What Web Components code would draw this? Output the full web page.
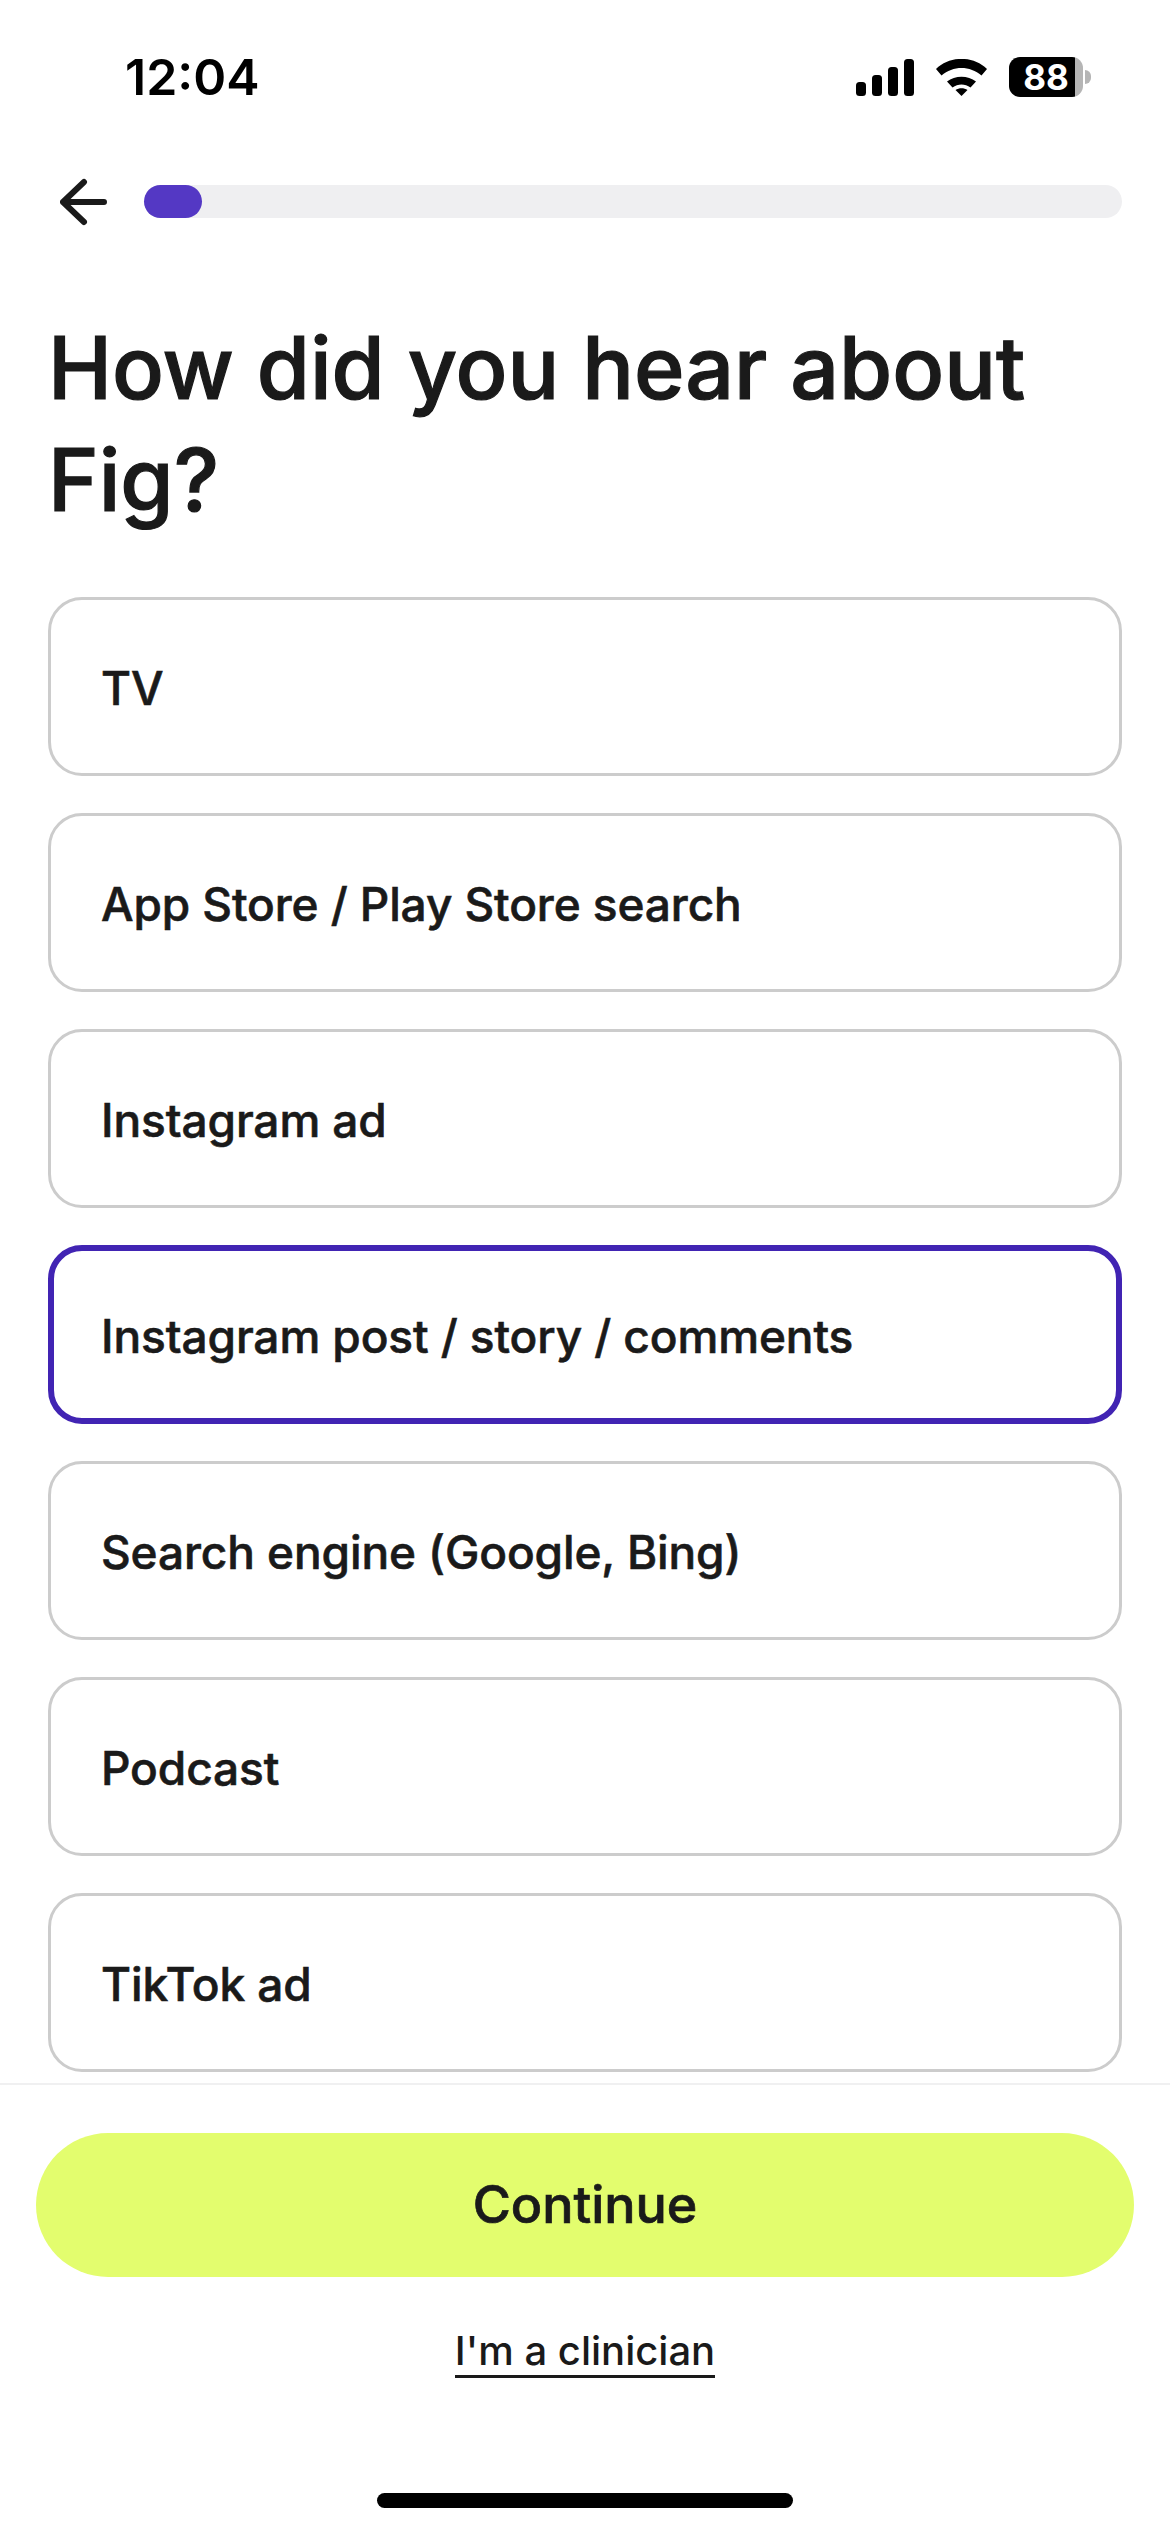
<!DOCTYPE html>
<html lang="en">
<head>
<meta charset="utf-8">
<title>Fig</title>
<style>
  html, body { margin: 0; padding: 0; background: #fff; }
  body { font-family: "Inter", "Liberation Sans", sans-serif; color: #1a1a1a; }
</style>
</head>
<body>
<fig-screen>
  <fig-status-bar slot="status"></fig-status-bar>
  <fig-progress-header slot="nav"></fig-progress-header>
  <span slot="title">How did you hear about Fig?</span>
  <option-card>TV</option-card>
  <option-card>App Store / Play Store search</option-card>
  <option-card>Instagram ad</option-card>
  <option-card selected>Instagram post / story / comments</option-card>
  <option-card>Search engine (Google, Bing)</option-card>
  <option-card>Podcast</option-card>
  <option-card>TikTok ad</option-card>
  <fig-footer slot="footer"></fig-footer>
</fig-screen>
<script>
class FigScreen extends HTMLElement {
  constructor() {
    super();
    this.attachShadow({ mode: "open" });
    this.shadowRoot.innerHTML = `
      <style>
        :host {
          display: flex;
          flex-direction: column;
          width: 1170px;
          height: 2532px;
          overflow: hidden;
          background: #fff;
        }
        h1 {
          margin: 59px 100px 61px 48px;
          font-size: 86px;
          line-height: 112px;
          font-weight: 500;
          -webkit-text-stroke: 1.2px #1a1a1a;
          color: #1a1a1a;
        }
        .list {
          flex: 1;
          min-height: 0;
          overflow: hidden;
          display: flex;
          flex-direction: column;
          gap: 37px;
          padding: 0 48px;
        }
      </style>
      <slot name="status"></slot>
      <slot name="nav"></slot>
      <h1><slot name="title"></slot></h1>
      <div class="list"><slot></slot></div>
      <slot name="footer"></slot>
    `;
  }
}

class FigStatusBar extends HTMLElement {
  constructor() {
    super();
    this.attachShadow({ mode: "open" });
    this.shadowRoot.innerHTML = `
      <style>
        :host {
          display: flex;
          justify-content: space-between;
          align-items: flex-start;
          box-sizing: border-box;
          height: 150px;
          padding: 57px 79px 0 125px;
        }
        .time {
          font-family: "Inter", "Liberation Sans", sans-serif;
          font-size: 50px;
          line-height: 40px;
          font-weight: 600;
          color: #000;
        }
        .icons { display: flex; align-items: flex-start; gap: 22px; }
        svg { display: block; }
        .signal { margin-top: 2px; }
        .wifi { margin-top: 2px; }
        .battery {
          display: flex;
          width: 74px;
          height: 40px;
          border-radius: 11px;
          overflow: hidden;
          background: linear-gradient(90deg, #000 66px, #b5b5b5 66px);
          margin-right: 8px;
        }
        .battery span {
          width: 74px;
          text-align: center;
          font-family: "Inter", "Liberation Sans", sans-serif;
          font-size: 35px;
          line-height: 40px;
          font-weight: 700;
          color: #fff;
        }
        .wrap { position: relative; display: flex; }
        .nub {
          position: absolute;
          left: 76px;
          top: 13px;
          width: 6px;
          height: 14px;
          border-radius: 0 7px 7px 0;
          background: #b5b5b5;
        }
      </style>
      <div class="time">12:04</div>
      <div class="icons">
        <svg class="signal" width="58" height="37" viewBox="0 0 58 37" fill="#000">
          <rect x="0" y="23" width="10" height="14" rx="3.5"/>
          <rect x="16" y="16" width="10" height="21" rx="3.5"/>
          <rect x="32" y="8" width="10" height="29" rx="3.5"/>
          <rect x="48" y="0" width="10" height="37" rx="3.5"/>
        </svg>
        <svg class="wifi" width="51" height="37" viewBox="0 0 51 37" fill="#000">
          <path d="M0 10C14-3.500 37-3.500 51 10L45.500 16.500C34 6.500 17 6.500 5.500 16.500Z"/>
          <path d="M11 22.500C19 16 32 16 40 22.500L34.500 28.500C29 24.500 22 24.500 16.500 28.500Z"/>
          <path d="M19.500 31C23 28.500 28 28.500 31.500 31L25.500 37Z"/>
        </svg>
        <div class="wrap">
          <div class="battery"><span>88</span></div>
          <div class="nub"></div>
        </div>
      </div>
    `;
  }
}

class FigProgressHeader extends HTMLElement {
  constructor() {
    super();
    this.attachShadow({ mode: "open" });
    this.shadowRoot.innerHTML = `
      <style>
        :host {
          display: flex;
          align-items: center;
          gap: 36px;
          box-sizing: border-box;
          height: 103px;
          padding: 0 48px 0 60px;
        }
        svg { display: block; flex: none; }
        .track {
          flex: 1;
          height: 33px;
          border-radius: 17px;
          background: #efeff1;
        }
        .fill {
          width: 58px;
          height: 100%;
          border-radius: 17px;
          background: #5438c4;
        }
      </style>
      <svg width="48" height="48" viewBox="0 0 48 48" fill="none" stroke="#1a1a1a" stroke-width="6" stroke-linecap="round" stroke-linejoin="round">
        <path d="M44 24H3M24 4L3 24L24 44"/>
      </svg>
      <div class="track"><div class="fill"></div></div>
    `;
  }
}

class OptionCard extends HTMLElement {
  constructor() {
    super();
    this.attachShadow({ mode: "open" });
    this.shadowRoot.innerHTML = `
      <style>
        :host {
          display: flex;
          flex: none;
          align-items: center;
          box-sizing: border-box;
          height: 179px;
          padding: 2px 50px 0;
          border: 3px solid #cccccc;
          border-radius: 34px;
          background: #fff;
          font-size: 46px;
          font-weight: 500;
          -webkit-text-stroke: 0.6px #1a1a1a;
          letter-spacing: -0.1px;
          color: #1a1a1a;
        }
        :host([selected]) {
          border: 6px solid #4124b3;
          padding: 2px 47px 0;
        }
      </style>
      <slot></slot>
    `;
  }
}

class FigFooter extends HTMLElement {
  constructor() {
    super();
    this.attachShadow({ mode: "open" });
    this.shadowRoot.innerHTML = `
      <style>
        :host {
          display: flex;
          flex-direction: column;
          align-items: center;
          box-sizing: border-box;
          height: 449px;
          padding: 48px 36px 0;
          border-top: 2px solid #f0f0f1;
        }
        .continue {
          display: flex;
          align-items: center;
          justify-content: center;
          align-self: stretch;
          box-sizing: border-box;
          height: 144px;
          padding-bottom: 2px;
          border-radius: 72px;
          background: #e3fd6e;
          font-size: 52px;
          font-weight: 500;
          -webkit-text-stroke: 0.7px #1a1a1a;
          color: #1a1a1a;
        }
        .clinician {
          margin-top: 50px;
          font-size: 40px;
          line-height: 48px;
          font-weight: 500;
          color: #1a1a1a;
          border-bottom: 3px solid #1a1a1a;
        }
        .home {
          margin-top: auto;
          margin-bottom: 24px;
          width: 416px;
          height: 15px;
          border-radius: 8px;
          background: #000;
        }
      </style>
      <div class="continue">Continue</div>
      <div class="clinician">I'm a clinician</div>
      <div class="home"></div>
    `;
  }
}

customElements.define("fig-screen", FigScreen);
customElements.define("fig-status-bar", FigStatusBar);
customElements.define("fig-progress-header", FigProgressHeader);
customElements.define("option-card", OptionCard);
customElements.define("fig-footer", FigFooter);
</script>
</body>
</html>
